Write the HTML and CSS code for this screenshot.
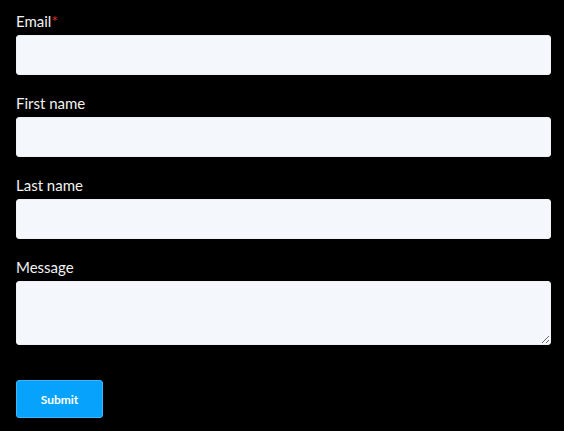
FILE: index.html
```html
<!DOCTYPE html>
<html lang="en">
<head>
  <meta charset="UTF-8" />
  <title>Contact form</title>
  <meta name="viewport" content="width=device-width, initial-scale=1.0"/>
  <link rel="stylesheet" href="styles.css">
</head>
<body>

  <form class="contact-form">
    <div class="field">
      <label for="email">Email<span class="req">*</span></label>
      <input type="email" id="email" />
    </div>
    <div class="field">
      <label for="firstname">First name</label>
      <input type="text" id="firstname" />
    </div>
    <div class="field">
      <label for="lastname">Last name</label>
      <input type="text" id="lastname" />
    </div>
    <div class="field">
      <label for="message">Message</label>
      <textarea id="message"></textarea>
    </div>
    <button type="button" class="submit">Submit</button>
  </form>

</body>
</html>
```

FILE: styles.css
```css
* { margin: 0; padding: 0; box-sizing: border-box; }
body { font-family: Lato, "Liberation Sans", sans-serif; background: #000; color: #f2f2f2; }

.contact-form { padding: 12px 13px 0 16px; }

.field { margin-bottom: 19px; }
.field label { display: block; font-size: 15px; line-height: 18px; margin-bottom: 5px; }
.field .req { color: #e03131; }

.field input, .field textarea {
  display: block; width: 100%; height: 40px; background: #f4f8fd; border: 1px solid #eef2f7;
  border-radius: 3px; font-family: inherit; font-size: 15px; padding: 0 10px; color: #33475b;
}
.field textarea { height: 64px; padding: 8px 10px; resize: vertical; }

.submit {
  margin-top: 16px; width: 87px; height: 38px; background: #06a2fb; color: #fff;
  border: 1px solid #3bb6ff; border-radius: 3px; font-family: inherit; font-weight: 700; font-size: 12px; cursor: pointer;
}
```
